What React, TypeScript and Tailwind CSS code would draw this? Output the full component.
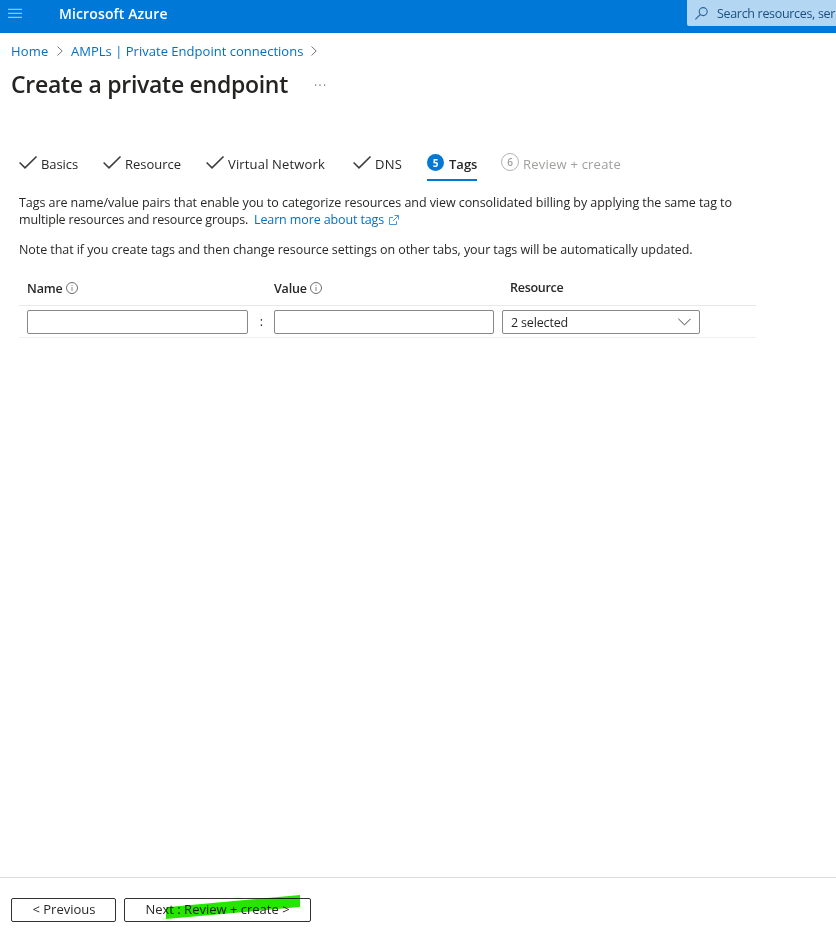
import type { ReactNode } from "react";

function Chevron() {
  return (
    <svg className="h-[10px] w-[6px] shrink-0" viewBox="0 0 6 10" fill="none" stroke="#767676">
      <path d="M.5.5 5.2 5 .5 9.5" />
    </svg>
  );
}

function Check() {
  return (
    <svg className="mt-[6px] h-[14px] w-[19px] shrink-0" viewBox="0 0 19 14" fill="none" stroke="#3b3a39" strokeWidth="1.5">
      <path d="M.6 6.5 6 11.9 17.5.5" />
    </svg>
  );
}

function Info() {
  return (
    <svg className="mb-[2px] h-[12px] w-[12px] shrink-0" viewBox="0 0 12 12" fill="none" stroke="#605e5c">
      <circle cx="6" cy="6" r="5.5" strokeWidth=".9" />
      <path d="M6 5v4M6 3v1" strokeWidth="1" stroke="#8a8886" />
    </svg>
  );
}

function DoneTab({ className, children }: { className: string; children: ReactNode }) {
  return (
    <div className={`flex shrink-0 items-start ${className}`}>
      <Check />
      <span className="mt-[2px] ml-[3px]">{children}</span>
    </div>
  );
}

export default function App() {
  return (
    <div className="flex h-[935px] w-[836px] flex-col overflow-hidden bg-white font-['Open_Sans','Noto_Sans',sans-serif] text-[13px] leading-[17px] whitespace-nowrap text-[#292827]">
      <header className="flex h-[33px] shrink-0 items-start bg-[#0078d7] text-white">
        <svg className="mt-[8px] ml-[8px] h-[11px] w-[14px] shrink-0" viewBox="0 0 14 11" stroke="#8fc5f0" strokeWidth="1.3">
          <path d="M0 1.3h14M0 5.3h14M0 9.3h14" />
        </svg>
        <div className="mt-[4px] ml-[37px] w-[628px] shrink-0 text-[14px] leading-[19px] font-semibold tracking-[0.12px]">Microsoft Azure</div>
        <div className="flex h-[26px] w-[149px] shrink-0 items-center rounded-bl-[2px] bg-[#b3d6f3] text-[#1b4f80]">
          <svg className="ml-[8px] h-[13px] w-[13px] shrink-0" viewBox="0 0 13 13" fill="none" stroke="#2d659b" strokeWidth="1.1">
            <circle cx="8.2" cy="4.6" r="4" />
            <path d="M5.3 7.5.4 12.4" />
          </svg>
          <span className="ml-[9px] text-[12.5px] tracking-[-0.32px]">Search resources, ser</span>
        </div>
      </header>

      <nav className="mt-[9px] ml-[11px] flex h-[18px] shrink-0 items-center text-[#0071c5]">
        <span className="w-[46px] tracking-[0.15px]">Home</span>
        <Chevron />
        <span className="ml-[8px] w-[240px] tracking-[0.02px]">AMPLs | Private Endpoint connections</span>
        <Chevron />
      </nav>

      <div className="mt-[8px] ml-[11px] flex h-[32px] shrink-0 items-center">
        <h1 className="w-[303px] text-[23px] leading-[32px] font-semibold tracking-[-0.28px] text-[#252423]">Create a private endpoint</h1>
        <svg className="mt-[2px] h-[2px] w-[12px]" viewBox="0 0 12 2" fill="#605e5c">
          <path d="M1 .5h1.2v1.2H1zM5.4 .5h1.2v1.2H5.4zM10 .5h1.2v1.2H10z" />
        </svg>
      </div>

      <div className="mt-[50px] ml-[19px] flex h-[31px] shrink-0 items-start leading-[24px]">
        <DoneTab className="w-[84px] tracking-[-0.08px]">Basics</DoneTab>
        <DoneTab className="w-[103px]">Resource</DoneTab>
        <DoneTab className="w-[147px] tracking-[0.16px]">Virtual Network</DoneTab>
        <DoneTab className="w-[74px] tracking-[0.3px]">DNS</DoneTab>
        <div className="flex h-[31px] w-[50px] shrink-0 border-b-2 border-[#0078d4] font-semibold">
          <span className="mt-[4px] flex h-[17px] w-[17px] shrink-0 items-center justify-center rounded-full bg-[#0078d4] text-[10px] leading-none font-bold text-white">5</span>
          <span className="mt-[2px] ml-[5px]">Tags</span>
        </div>
        <div className="ml-[24px] flex shrink-0 text-[#a19f9d]">
          <span className="mt-[3px] flex h-[18px] w-[18px] items-center justify-center rounded-full border border-[#b5b3b1] text-[10px] leading-none font-semibold">6</span>
          <span className="mt-[2px] ml-[4px] tracking-[0.22px]">Review + create</span>
        </div>
      </div>

      <p className="mt-[13px] ml-[19px] shrink-0 text-[12.5px]">
        <span className="tracking-[-0.06px]">Tags are name/value pairs that enable you to categorize resources and view consolidated billing by applying the same tag to</span>
        <br />
        <span className="inline-block w-[235px] tracking-[-0.17px]">multiple resources and resource groups.</span>
        <a className="tracking-[-0.12px] text-[#0071c5]">
          Learn more about tags
          <svg className="ml-[5px] inline h-[10px] w-[10px] align-[-1px]" viewBox="0 0 10 10" fill="none" stroke="#4a94dc">
            <path d="M4 2.5H.5v7h7V6M5.5.5h4v4M9.5.5 4 6" />
          </svg>
        </a>
      </p>
      <p className="mt-[13px] ml-[19px] shrink-0 text-[12.5px] tracking-[-0.066px]">Note that if you create tags and then change resource settings on other tabs, your tags will be automatically updated.</p>

      <section className="mt-[21px] ml-[19px] w-[737px] shrink-0 text-[12.5px]">
        <div className="flex h-[27px] items-start border-b border-[#e8e8e8] pl-[8px] font-semibold">
          <div className="mt-px flex w-[247px] items-center tracking-[-0.15px]"><span className="w-[39px]">Name</span><Info /></div>
          <div className="mt-px flex w-[236px] items-center tracking-[-0.2px]"><span className="w-[36px]">Value</span><Info /></div>
          <span className="tracking-[-0.27px]">Resource</span>
        </div>
        <div className="flex h-[32px] items-center border-b border-[#f0f0f0] pl-[8px]">
          <input className="h-[24px] w-[221px] rounded-[2px] border border-[#8a8886]" />
          <span className="w-[26px] pl-px text-center">:</span>
          <input className="h-[24px] w-[220px] rounded-[2px] border border-[#8a8886]" />
          <div className="ml-[8px] flex h-[24px] w-[198px] items-center justify-between rounded-[2px] border border-[#8a8886] pr-[8px] pl-[8px]">
            <span className="pt-px tracking-[-0.16px]">2 selected</span>
            <svg className="h-[8px] w-[13px]" viewBox="0 0 13 8" fill="none" stroke="#484644">
              <path d="m.4.8 6.1 6.1L12.6.8" />
            </svg>
          </div>
        </div>
      </section>

      <footer className="mt-auto flex h-[58px] shrink-0 items-start gap-[8px] border-t border-[#dcdcdc] pt-[20px] pl-[11px]">
        <button className="h-[24px] w-[105px] rounded-[2px] border border-[#323130] pb-[2px] pl-px">&lt; Previous</button>
        <button className="relative h-[24px] w-[187px] rounded-[2px] border border-[#323130] pb-[2px]">
          Next : Review + create &gt;
          <svg className="absolute top-[-4px] left-[41px] h-[25px] w-[134px] mix-blend-multiply" viewBox="0 0 134 25">
            <path d="M0 12.3 134 0v12L0 24z" fill="#26e600" />
          </svg>
        </button>
      </footer>
    </div>
  );
}
